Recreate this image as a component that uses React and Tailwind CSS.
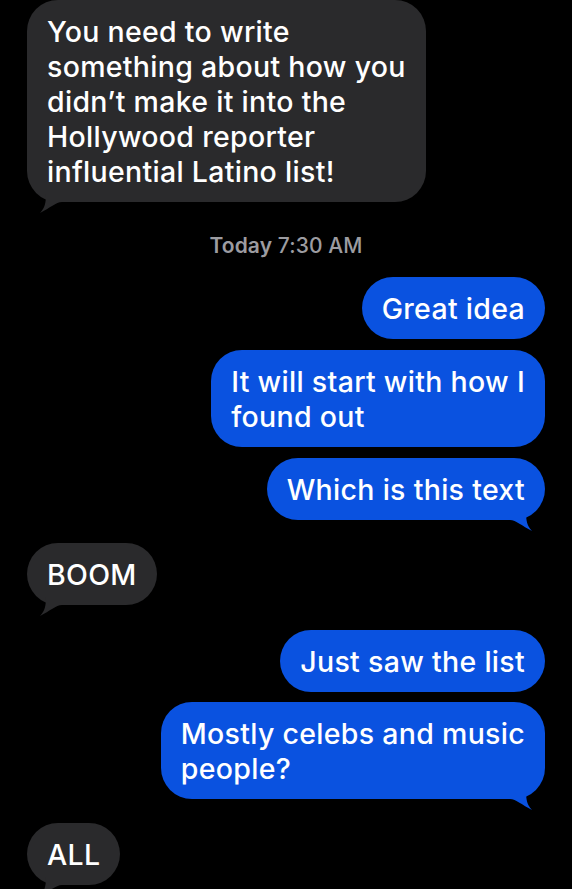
import React from "react";

const Tail = ({ side, color }) => (
  <svg
    width="24"
    height="20"
    viewBox="0 0 24 20"
    className={
      side === "left"
        ? "absolute left-[11px] bottom-[-12px]"
        : "absolute right-[11px] bottom-[-12px] -scale-x-100"
    }
  >
    <path
      d="M8 0 L24 0 L24 8 C18 8 12 14 2 19 C7 14 8 8 8 0 Z"
      fill={color}
    />
  </svg>
);

const Bubble = ({ from, tail, className = "", children }) => {
  const mine = from === "me";
  const color = mine ? "#0a52e0" : "#2a2a2c";
  return (
    <div className={`flex ${mine ? "justify-end pr-[27px]" : "justify-start pl-[27px]"} ${className}`}>
      <div
        className={`relative w-fit rounded-[31px] px-5 py-[13.5px] text-[28.5px] font-medium leading-[35px] tracking-[0.3px] text-white ${
          mine ? "bg-[#0a52e0]" : "bg-[#2a2a2c]"
        }`}
      >
        {tail && <Tail side={mine ? "right" : "left"} color={color} />}
        <span className="relative whitespace-nowrap">{children}</span>
      </div>
    </div>
  );
};

export default function App() {
  return (
    <div
      className="h-[889px] w-[572px] overflow-hidden bg-black"
      style={{ fontFamily: "Inter, 'Liberation Sans', sans-serif" }}
    >
      <Bubble from="them" tail>
        You need to write
        <br />
        something about how you
        <br />
        didn’t make it into the
        <br />
        Hollywood reporter
        <br />
        influential Latino list!
      </Bubble>

      <div className="mt-8 text-center text-[21px] font-medium leading-6 tracking-[0.1px] text-[#9c9ca1]">
        <span className="font-semibold">Today</span> 7:30 AM
      </div>

      <Bubble from="me" className="mt-[19px]">
        Great idea
      </Bubble>
      <Bubble from="me" className="mt-[11px]">
        It will start with how I
        <br />
        found out
      </Bubble>
      <Bubble from="me" tail className="mt-[11px]">
        Which is this text
      </Bubble>

      <Bubble from="them" tail className="mt-[23px]">
        BOOM
      </Bubble>

      <Bubble from="me" className="mt-[25px]">
        Just saw the list
      </Bubble>
      <Bubble from="me" tail className="mt-[10px]">
        Mostly celebs and music
        <br />
        people?
      </Bubble>

      <Bubble from="them" tail className="mt-6">
        ALL
      </Bubble>
    </div>
  );
}
